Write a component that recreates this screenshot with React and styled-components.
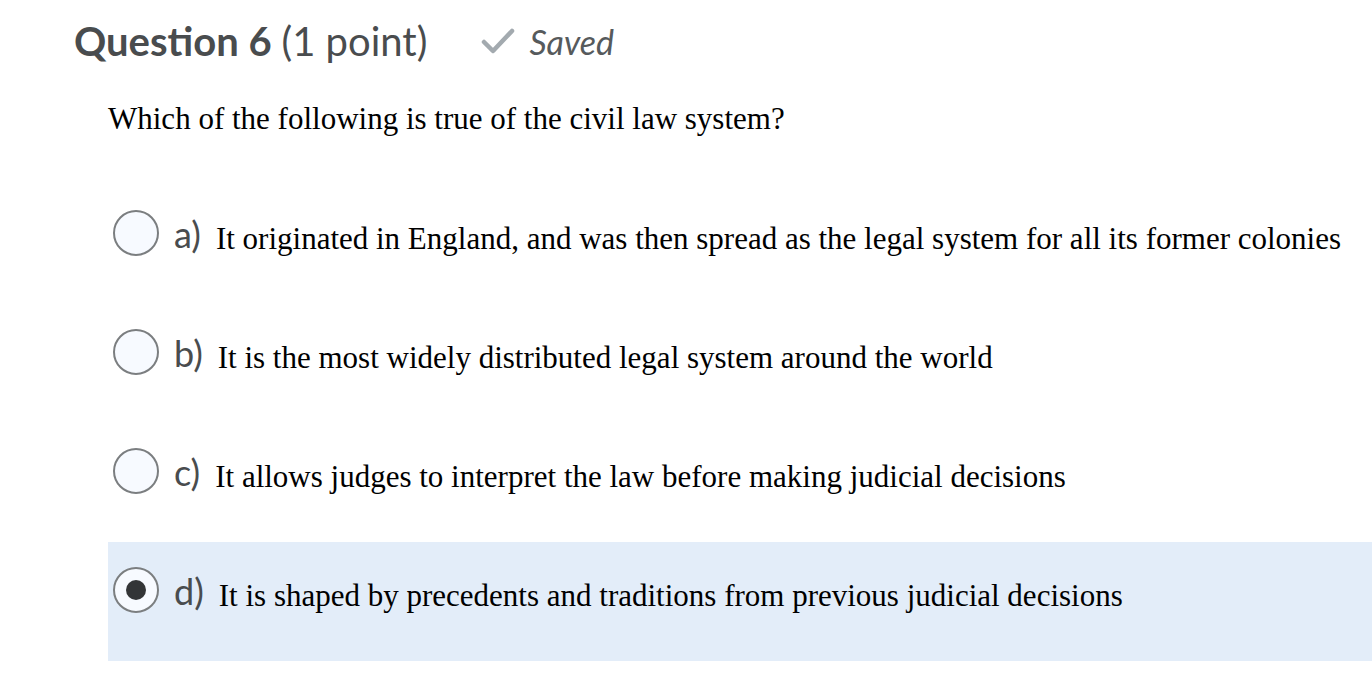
import React from "react";
import styled, { createGlobalStyle } from "styled-components";

const GlobalStyle = createGlobalStyle`
	body {
		margin: 0;
		background: #ffffff;
		font-family: "Lato", "Liberation Sans", sans-serif;
	}
`;

const Page = styled.div`
	padding: 16px 0 0 74px;
`;

const Header = styled.div`
	display: flex;
	align-items: center;
	height: 50px;
	gap: 54px;
`;

const Title = styled.h2`
	margin: 0;
	font-family: "Lato", sans-serif;
	font-size: 40px;
	font-weight: 700;
	color: #494c4e;
	span {
		font-weight: 400;
	}
`;

const Status = styled.div`
	display: flex;
	align-items: center;
	gap: 14px;
	font-family: "Lato", sans-serif;
	font-style: italic;
	font-size: 34px;
	color: #565a5c;
	svg {
		width: 34px;
		height: 28px;
	}
`;

const Prompt = styled.p`
	margin: 35px 0 0 34px;
	font-family: "Liberation Serif", "Times New Roman", serif;
	font-size: 31px;
	color: #000;
`;

const Options = styled.div`
	margin: 48px 0 0 34px;
	display: flex;
	flex-direction: column;
`;

const Option = styled.label`
	box-sizing: border-box;
	display: flex;
	align-items: center;
	height: 119px;
	padding: 0 0 12px 5px;
	background: ${(p) => (p.selected ? "#e3edf9" : "transparent")};
`;

const Radio = styled.span`
	box-sizing: border-box;
	width: 46px;
	height: 46px;
	border-radius: 50%;
	border: 2px solid #7b7e80;
	background: #f7faff;
	display: flex;
	align-items: center;
	justify-content: center;
	flex-shrink: 0;
	margin-top: -12px;
	&::after {
		content: "";
		display: ${(p) => (p.checked ? "block" : "none")};
		width: 20px;
		height: 20px;
		border-radius: 50%;
		background: #333537;
	}
`;

const Letter = styled.span`
	font-family: "Lato", sans-serif;
	font-size: 36px;
	color: #494c4e;
	margin-left: 15px;
	margin-top: -10px;
`;

const Answer = styled.span`
	font-family: "Liberation Serif", "Times New Roman", serif;
	font-size: 31px;
	color: #000;
	margin-left: 15px;
`;

const Check = () => (
	<svg viewBox="0 0 34 28" fill="none">
		<path
			d="M3 15 L12 24 L31 4"
			stroke="#a3aaaf"
			strokeWidth="4.5"
			strokeLinecap="round"
			strokeLinejoin="round"
		/>
	</svg>
);

const answers = [
	{ key: "a", text: "It originated in England, and was then spread as the legal system for all its former colonies" },
	{ key: "b", text: "It is the most widely distributed legal system around the world" },
	{ key: "c", text: "It allows judges to interpret the law before making judicial decisions" },
	{ key: "d", text: "It is shaped by precedents and traditions from previous judicial decisions" },
];

const App = () => {
	const selected = "d";
	return (
		<>
			<GlobalStyle />
			<Page>
				<Header>
					<Title>
						Question 6 <span>(1 point)</span>
					</Title>
					<Status>
						<Check />
						Saved
					</Status>
				</Header>
				<Prompt>Which of the following is true of the civil law system?</Prompt>
				<Options>
					{answers.map((a) => (
						<Option key={a.key} selected={a.key === selected}>
							<Radio checked={a.key === selected} />
							<Letter>{a.key})</Letter>
							<Answer>{a.text}</Answer>
						</Option>
					))}
				</Options>
			</Page>
		</>
	);
};

export default App;
